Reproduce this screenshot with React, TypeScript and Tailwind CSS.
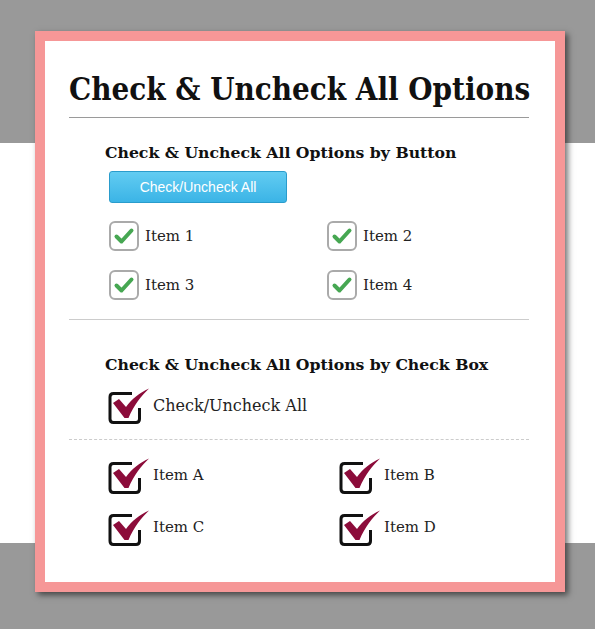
import React from "react";

const serif = { fontFamily: '"DejaVu Serif", "Liberation Serif", serif' };
const serifCond = { fontFamily: '"DejaVu Serif Condensed", "DejaVu Serif", "Liberation Serif", serif' };

function GreenBox() {
  return (
    <svg width="30" height="30" viewBox="0 0 30 30" className="shrink-0">
      <rect x="1" y="1" width="28" height="28" rx="5" fill="#fff" stroke="#aaaaaa" strokeWidth="2" />
      <path d="M7.5 15.5 L12.5 20.5 L22.5 9.5" fill="none" stroke="#46a752" strokeWidth="4" strokeLinecap="round" strokeLinejoin="round" />
    </svg>
  );
}

function MaroonBox() {
  return (
    <svg width="42" height="37" viewBox="0 0 42 37" className="shrink-0">
      <path d="M24 6.5 H5.5 Q2 6.5 2 10 V32 Q2 35.5 5.5 35.5 H28 Q31.5 35.5 31.5 32 V21" fill="none" stroke="#111" strokeWidth="3" strokeLinejoin="round" />
      <path d="M5 16 L11 12 L18 20 C24 12 31 6 41 1.5 C33 9 26 18 20.5 31 L16.5 31 Z" fill="#8c0c3a" />
    </svg>
  );
}

function GreenItem({ label }: { label: string }) {
  return (
    <div className="flex items-center gap-[6px]">
      <GreenBox />
      <span className="text-[15px] text-[#222]" style={serif}>{label}</span>
    </div>
  );
}

function MaroonItem({ label, size }: { label: string; size?: string }) {
  return (
    <div className="flex items-end gap-[3px]">
      <MaroonBox />
      <span className={(size === "lg" ? "text-[16px] mb-[6px]" : "text-[15px] mb-[8px]") + " text-[#222]"} style={serif}>{label}</span>
    </div>
  );
}

export default function App() {
  return (
    <div className="w-[595px] h-[629px] overflow-hidden bg-[linear-gradient(to_bottom,#999999_0px,#999999_143px,#ffffff_143px,#ffffff_543px,#999999_543px)] pt-[31px]">
      <div className="ml-[35px] w-[530px] h-[561px] border-[10px] border-[#f69797] bg-white shadow-[3px_3px_6px_rgba(0,0,0,0.55)] pl-[24px] pr-[26px]">
        <h1 className="pt-[30px] pb-[10px] border-b border-[#9a9a9a] text-[31px] leading-[36px] font-bold text-[#111] whitespace-nowrap font-stretch-condensed" style={serifCond}>
          Check &amp; Uncheck All Options
        </h1>
        <div className="pl-[36px] pt-[25px]">
          <h2 className="text-[15.7px] leading-[20px] font-bold text-[#111]" style={serif}>
            Check &amp; Uncheck All Options by Button
          </h2>
          <button className="mt-[8px] ml-[4px] w-[178px] h-[32px] rounded-[3px] border border-[#2a9ccc] bg-[linear-gradient(to_bottom,#62ccf2,#3bb4e6)] text-white text-[14px]" style={{ fontFamily: '"Liberation Sans", Arial, sans-serif' }}>
            Check/Uncheck All
          </button>
          <div className="ml-[4px] mt-[18px] grid grid-cols-[218px_218px] gap-y-[19px]">
            <GreenItem label="Item 1" />
            <GreenItem label="Item 2" />
            <GreenItem label="Item 3" />
            <GreenItem label="Item 4" />
          </div>
        </div>
        <div className="mt-[19px] border-b border-[#cccccc]" />
        <div className="pl-[36px] pt-[35px]">
          <h2 className="text-[15.7px] leading-[20px] font-bold text-[#111]" style={serif}>
            Check &amp; Uncheck All Options by Check Box
          </h2>
          <div className="mt-[12px] ml-[3px]">
            <MaroonItem label="Check/Uncheck All" size="lg" />
          </div>
        </div>
        <div className="mt-[15px] border-b border-dashed border-[#cccccc]" />
        <div className="pl-[39px] pt-[17px] grid grid-cols-[231px_200px] gap-y-[15px]">
          <MaroonItem label="Item A" />
          <MaroonItem label="Item B" />
          <MaroonItem label="Item C" />
          <MaroonItem label="Item D" />
        </div>
      </div>
    </div>
  );
}
